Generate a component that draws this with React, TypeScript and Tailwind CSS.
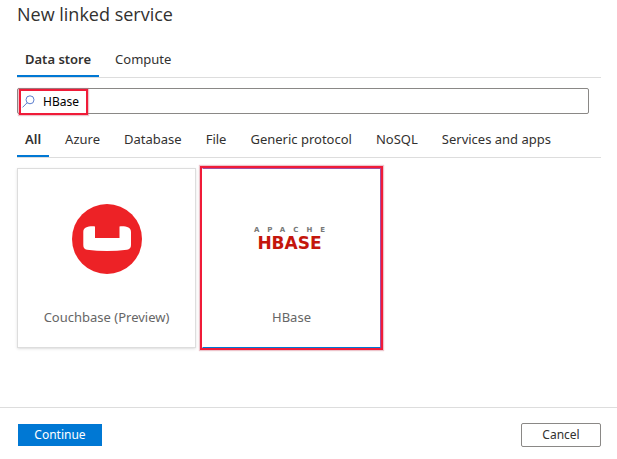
import { useState } from "react";

const stores = ["All", "Azure", "Database", "File", "Generic protocol", "NoSQL", "Services and apps"];

function Tabs({ items, label }: { items: string[]; label: string }) {
  const [active, setActive] = useState(items[0]);
  return (
    <div role="tablist" aria-label={label} className="flex gap-2 border-b border-[#dddddd]">
      {items.map((item) => (
        <button
          key={item}
          type="button"
          role="tab"
          aria-selected={item === active}
          onClick={() => setActive(item)}
          className={
            item === active
              ? "h-[35px] whitespace-nowrap border-b-2 border-[#0078d4] px-2 pt-0.5 text-[13px] font-semibold"
              : "h-[35px] whitespace-nowrap border-b-2 border-transparent px-2 pt-0.5 text-[13px]"
          }
        >
          {item}
        </button>
      ))}
    </div>
  );
}

function SearchIcon() {
  return (
    <svg width="14" height="14" viewBox="0 0 14 14" fill="none" stroke="#4a6fc8" strokeWidth="0.9" aria-hidden="true">
      <circle cx="9" cy="4.8" r="4" />
      <path d="M6.200 7.700 1.500 12.400" />
    </svg>
  );
}

function CouchbaseLogo() {
  return (
    <svg width="70" height="70" viewBox="0 0 70 70" aria-hidden="true">
      <circle cx="35" cy="35" r="35" fill="#ed2226" />
      <path
        d="M23 22.4V34H47.5V22.4C54 22 59 23 59 28V41C59 44 57.500 45.400 55 45.800C42 47.400 28 47.400 15 45.800C12.500 45.400 11.300 44 11.300 41V28C11.300 23 16.500 22 23 22.4Z"
        fill="#fff"
      />
    </svg>
  );
}

function HBaseLogo() {
  return (
    <div aria-hidden="true" className="flex flex-col items-center pr-1 font-['DejaVu_Sans'] font-bold">
      <span className="-mr-2 text-[7px] leading-[8px] tracking-[8px] text-[#777777]">APACHE</span>
      <span className="text-[17px] leading-[18px] text-[#c4160c]">HBASE</span>
    </div>
  );
}

export default function App() {
  const [query, setQuery] = useState("HBase");
  return (
    <main className="bg-white font-['Noto_Sans','Open_Sans',sans-serif] text-[#323130]">
      <div className="px-4 pl-[17px]">
        <h1 className="pt-0.5 font-['Open_Sans',sans-serif] text-[18px] leading-6">New linked service</h1>
        <div className="mt-4">
          <Tabs items={["Data store", "Compute"]} label="Service type" />
        </div>
        <div className="mt-2.5 mr-3 flex h-[26px] items-center rounded-xs border border-[#8a8886]">
          <label className="relative mt-0.5 ml-[3px] flex h-[22px] w-[65px] flex-none items-center gap-2">
            <SearchIcon />
            <input
              type="text"
              aria-label="Search"
              value={query}
              onChange={(e) => setQuery(e.target.value)}
              className="w-10 bg-transparent text-xs text-black outline-none"
            />
            <span className="pointer-events-none absolute -inset-0.5 border-2 border-[#f01b38] shadow-[0_0_1px_1px_rgba(200,90,110,0.35)]" />
          </label>
        </div>
        <div className="mt-2">
          <Tabs items={stores} label="Category" />
        </div>
        <div className="mt-2.5 flex gap-1.5">
          <button
            type="button"
            className="flex h-[180px] w-[179px] flex-col items-center border border-[#dddddd] pt-[35px] shadow-sm"
          >
            <CouchbaseLogo />
            <span className="mt-[31px] text-[13px] leading-6 text-[#666666]">Couchbase (Preview)</span>
          </button>
          <button
            type="button"
            className="relative flex h-[180px] w-[179px] flex-col items-center border border-[#a34fa0] border-b-[#0078d4] border-l-white pt-[35px]"
          >
            <span className="flex h-[70px] items-center">
              <HBaseLogo />
            </span>
            <span className="mt-[31px] text-[13px] leading-6 text-[#666666]">HBase</span>
            <span className="pointer-events-none absolute -inset-[3px] border-2 border-[#f01b38] shadow-[0_0_1px_1px_rgba(200,90,110,0.35)]" />
          </button>
        </div>
      </div>
      <footer className="mt-[59px] flex items-center justify-between border-t border-[#dddddd] px-4 py-[15px] pl-[18px]">
        <button type="button" className="h-[22px] w-[84px] bg-[#0078d4] text-xs text-white">
          Continue
        </button>
        <button type="button" className="h-6 w-20 rounded-xs border border-[#8a8886] text-xs">
          Cancel
        </button>
      </footer>
    </main>
  );
}
